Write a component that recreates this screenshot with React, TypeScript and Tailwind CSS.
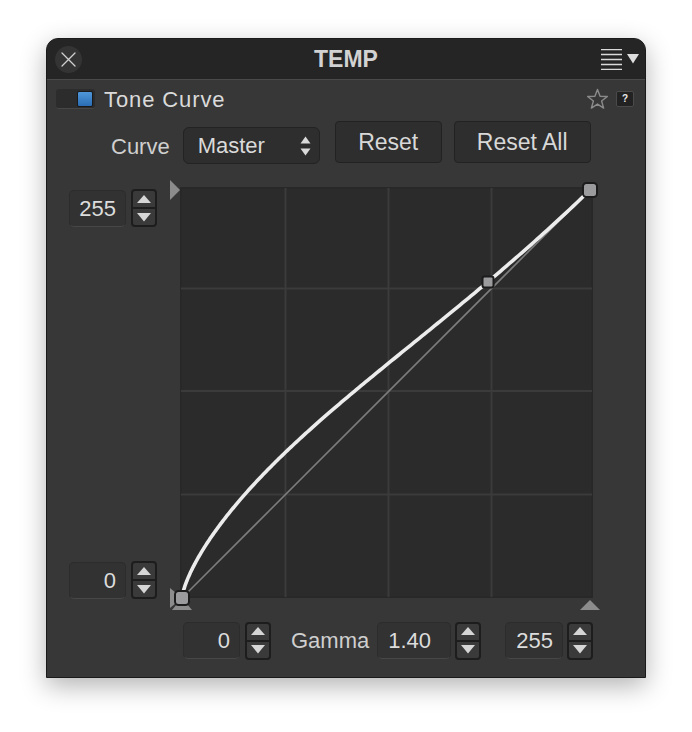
import React from "react";

function Tri({ dir }: { dir: "up" | "down" }) {
  return (
    <svg width="14" height="9" viewBox="0 0 14 9">
      {dir === "up" ? (
        <polygon points="0,8 7,0 14,8" fill="#d6d6d6" />
      ) : (
        <polygon points="0,0 14,0 7,8.5" fill="#d6d6d6" />
      )}
    </svg>
  );
}

function Spin() {
  return (
    <div className="flex h-[38px] w-[26px] flex-col gap-[2px] rounded-[4px] border-2 border-[#1d1d1d] bg-[#1d1d1d]">
      <div className="flex flex-1 items-center justify-center rounded-t-[2px] bg-[#3a3a3a]">
        <Tri dir="up" />
      </div>
      <div className="flex flex-1 items-center justify-center rounded-b-[2px] bg-[#3a3a3a]">
        <Tri dir="down" />
      </div>
    </div>
  );
}

function Field({ value, className }: { value: string; className: string }) {
  return (
    <div
      className={
        "flex h-[37px] items-center justify-end rounded-[5px] border border-[#2c2c2c] border-b-[#474747] bg-[#323232] text-[22px] text-[#dcdcdc] " +
        className
      }
    >
      {value}
    </div>
  );
}

function curvePath() {
  const n = 240;
  const pts: string[] = [];
  for (let i = 0; i <= n; i++) {
    const t = i / n;
    const x = t * t; // denser sampling near 0
    const y = Math.pow(x, 1 / 1.4) * (1 - 0.256 * x * (1 - x));
    pts.push(`${(17 + 408 * x).toFixed(2)},${(423 - 408 * y).toFixed(2)}`);
  }
  return "M" + pts.join(" L");
}

function Graph() {
  return (
    <svg width="435" height="440" viewBox="0 0 435 440" className="block">
      <rect x="15" y="12" width="413" height="411" fill="#2b2b2b" />
      <rect x="16" y="13" width="411" height="409" fill="none" stroke="#282828" strokeWidth="2" />
      {[120.5, 223.5, 326.5].map((x) => (
        <line key={"v" + x} x1={x} y1="13" x2={x} y2="422" stroke="#3b3b3b" strokeWidth="2" />
      ))}
      {[113.5, 216, 319.5].map((y) => (
        <line key={"h" + y} x1="16" y1={y} x2="427" y2={y} stroke="#3b3b3b" strokeWidth="2" />
      ))}
      {/* markers */}
      <polygon points="5,5 15,15 5,25" fill="#8c8c8c" />
      <polygon points="415,435 425,425 435,435" fill="#8c8c8c" />
      <polygon points="5,413 17,423 5,433" fill="#8c8c8c" />
      <polygon points="7,435 17,423 27,435" fill="#8c8c8c" />
      {/* diagonal */}
      <line x1="17" y1="423" x2="425" y2="15" stroke="#7c7c7c" strokeWidth="1.6" />
      {/* curve */}
      <path d={curvePath()} fill="none" stroke="#ececec" strokeWidth="3.6" strokeLinecap="round" strokeLinejoin="round" />
      {/* points */}
      <rect x="10" y="416" width="14" height="14" rx="3.5" fill="#9b9b9e" stroke="#1c1c1c" strokeWidth="2" />
      <rect x="418" y="8" width="14" height="14" rx="3.5" fill="#9b9b9e" stroke="#1c1c1c" strokeWidth="2" />
      <rect x="317.5" y="101.5" width="11" height="11" rx="2" fill="#9b9b9e" stroke="#1c1c1c" strokeWidth="2" />
    </svg>
  );
}

export default function App() {
  return (
    <div className="h-[732px] w-[692px] bg-white pl-[46px] pt-[38px] font-['Liberation_Sans',Arial,sans-serif]">
      <div className="flex h-[640px] w-[600px] flex-col overflow-hidden rounded-t-[12px] border border-[#1a1a1a] bg-[#373737] shadow-[0_8px_26px_rgba(0,0,0,0.3)]">
        {/* Title bar */}
        <div className="grid h-[41px] grid-cols-[1fr_auto_1fr] items-center border-b border-[#4a4a4a] bg-[#252525]">
          <div className="flex items-center pl-[8px] pt-[1px]">
            <div className="flex h-[27px] w-[27px] items-center justify-center rounded-full bg-[#343434]">
              <svg width="15" height="15" viewBox="0 0 15 15">
                <path d="M1 1 L14 14 M14 1 L1 14" stroke="#d0d0d0" strokeWidth="1.3" strokeLinecap="round" />
              </svg>
            </div>
          </div>
          <div className="pt-[1px] text-[23px] font-bold text-[#d2d2d2]">TEMP</div>
          <div className="flex items-center justify-end gap-[5px] pr-[6px]">
            <svg width="21" height="21" viewBox="0 0 21 21">
              {[0.5, 5.5, 10.5, 15.5, 20.5].map((y) => (
                <line key={y} x1="0" y1={y} x2="21" y2={y} stroke="#dadada" strokeWidth="1.3" />
              ))}
            </svg>
            <svg width="12" height="10" viewBox="0 0 12 10">
              <polygon points="0,0 12,0 6,9.5" fill="#dedede" />
            </svg>
          </div>
        </div>

        {/* Header row */}
        <div className="mt-[8px] flex h-[22px] items-center pl-[9px] pr-[11px]">
          <div className="flex h-[20px] w-[39px] items-center justify-end rounded-[3px] border-b border-[#474747] bg-[#2c2c2c] pr-[2px]">
            <div className="h-[16px] w-[16px] rounded-[2px] border border-[#1a1a1a] bg-gradient-to-b from-[#4f97d8] to-[#2a6db4]" />
          </div>
          <div className="ml-[9px] text-[22px] tracking-[0.9px] text-[#dadada]">Tone Curve</div>
          <div className="ml-auto flex items-center gap-[7px]">
            <svg width="23" height="22" viewBox="0 0 24 23">
              <polygon
                points="12,1.5 14.7,8.6 22.3,8.9 16.3,13.6 18.4,21 12,16.8 5.6,21 7.7,13.6 1.7,8.9 9.3,8.6"
                fill="none"
                stroke="#8a8a8a"
                strokeWidth="1.5"
                strokeLinejoin="round"
              />
            </svg>
            <div className="flex h-[16px] w-[18px] items-center justify-center rounded-[2px] border border-[#4a4a4a] bg-[#222222] text-[10px] font-bold leading-none text-[#e8e8e8]">
              ?
            </div>
          </div>
        </div>

        {/* Controls row */}
        <div className="mt-[11px] flex h-[43px] items-end pl-[64px]">
          <div className="flex h-[37px] items-center pt-[1px] text-[22px] text-[#cfcfcf]">Curve</div>
          <div className="ml-[13px] flex h-[37px] w-[137px] items-center justify-between rounded-[6px] border border-[#232323] bg-[#2e2e2e] pl-[14px] pr-[8px] text-[22px] text-[#dadada]">
            <span>Master</span>
            <svg width="11" height="20" viewBox="0 0 11 20">
              <polygon points="0.5,7.5 5.5,0.5 10.5,7.5" fill="#dadada" />
              <polygon points="0.5,12.5 10.5,12.5 5.5,19.5" fill="#dadada" />
            </svg>
          </div>
          <div className="mb-[1px] ml-[15px] flex h-[42px] w-[107px] items-center justify-center rounded-[4px] border border-[#222222] bg-[#2e2e2e] text-[23px] text-[#d8d8d8]">
            Reset
          </div>
          <div className="mb-[1px] ml-[12px] flex h-[42px] w-[137px] items-center justify-center rounded-[4px] border border-[#222222] bg-[#2e2e2e] text-[23px] text-[#d8d8d8]">
            Reset All
          </div>
        </div>

        {/* Graph section */}
        <div className="mt-[11px] flex h-[440px]">
          <div className="flex w-[118px] flex-col pl-[22px] pt-[14px]">
            <div className="flex items-center gap-[5px]">
              <Field value="255" className="w-[57px] pr-[9px]" />
              <Spin />
            </div>
            <div className="mb-[16px] mt-auto flex items-center gap-[5px]">
              <Field value="0" className="w-[57px] pr-[9px]" />
              <Spin />
            </div>
          </div>
          <Graph />
        </div>

        {/* Bottom row */}
        <div className="mt-[6px] flex h-[39px] items-center pl-[136px]">
          <div className="flex items-center gap-[5px]">
            <Field value="0" className="w-[57px] pr-[9px]" />
            <Spin />
          </div>
          <div className="ml-[20px] w-[86px] text-[22px] text-[#cfcfcf]">Gamma</div>
          <div className="flex items-center gap-[4px]">
            <Field value="1.40" className="w-[74px] pr-[19px]" />
            <Spin />
          </div>
          <div className="ml-[24px] flex items-center gap-[4px]">
            <Field value="255" className="w-[58px] pr-[9px]" />
            <Spin />
          </div>
        </div>
      </div>
    </div>
  );
}
